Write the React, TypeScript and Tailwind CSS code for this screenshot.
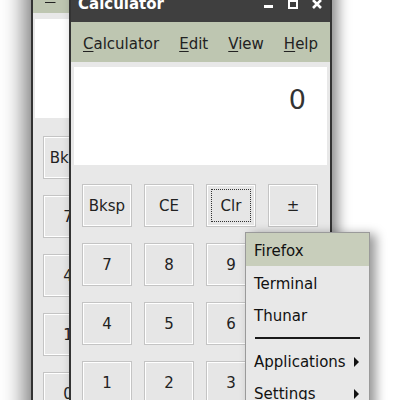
const font = { fontFamily: '"DejaVu Sans", Verdana, sans-serif' };

const keys = ['Bksp', 'CE', 'Clr', '±', '7', '8', '9', '÷', '4', '5', '6', '×', '1', '2', '3', '−', '0', '.', '=', '+'];

function Key({ label, focus }: { label: string; focus?: boolean }) {
  return (
    <div className="relative flex h-[43px] w-[50px] items-center justify-center border border-[#c4c4c4] bg-[#e6e6e6] pt-[2px] text-[15px] text-[#222] shadow-[inset_0_0_0_1px_#fff]">
      {label}
      {focus && <span className="absolute inset-[4px] border border-dotted border-[#333]" />}
    </div>
  );
}

function MenuBar() {
  const items = ['Calculator', 'Edit', 'View', 'Help'];
  return (
    <div className="flex h-[40px] items-center gap-[20px] bg-[#bec6b1] pl-[12px] pt-[4px] text-[15px] text-[#222]">
      {items.map(m => (
        <span key={m}>
          <span className="underline underline-offset-[2px]">{m[0]}</span>
          {m.slice(1)}
        </span>
      ))}
    </div>
  );
}

function Pad({ gap, labels }: { gap: number; labels?: boolean }) {
  return (
    <div className="grid grid-cols-[50px_50px_50px_50px] gap-x-[12px] gap-y-[16px] pl-[8px]" style={{ marginTop: gap }}>
      {keys.map(k => (
        <Key key={k} label={k} focus={labels && k === 'Clr'} />
      ))}
    </div>
  );
}

function TitleButtons() {
  return (
    <div className="flex items-end gap-[14px] pb-[13px]">
      <svg width="10" height="10" viewBox="0 0 10 10">
        <rect x="0" y="6" width="9" height="3" fill="#fff" />
      </svg>
      <svg width="10" height="10" viewBox="0 0 10 10">
        <rect x="1" y="1" width="8" height="8" fill="none" stroke="#fff" strokeWidth="2" />
        <rect x="0" y="0" width="10" height="3" fill="#fff" />
      </svg>
      <svg width="10" height="10" viewBox="0 0 10 10">
        <path d="M1 1 L9 9 M9 1 L1 9" stroke="#fff" strokeWidth="2.6" />
      </svg>
    </div>
  );
}

function MenuItem({ label, arrow }: { label: string; arrow?: boolean }) {
  return (
    <div className="flex h-[32px] items-center justify-between pl-[8px] pr-[10px] pt-[4px] text-[15px] text-[#111]">
      <span>{label}</span>
      {arrow && (
        <svg width="5" height="10" viewBox="0 0 5 10">
          <path d="M0 0 L5 5 L0 10 Z" fill="#111" />
        </svg>
      )}
    </div>
  );
}

export default function App() {
  return (
    <div className="relative h-[400px] w-[400px] overflow-hidden bg-white" style={font}>
      <div className="absolute left-[31px] top-[-27px] h-[460px] w-[264px] border-x-2 border-[#333] bg-[#e8e8e8] shadow-[-6px_0_22px_rgba(0,0,0,0.55)]">
        <MenuBar />
        <div className="flex flex-col px-[2px] pt-[6px]">
          <div className="h-[99px] bg-white" />
          <Pad gap={18} />
        </div>
      </div>

      <div className="absolute left-[69px] top-[-18px] h-[460px] w-[263px] border-x-2 border-[#333] bg-[#e8e8e8] shadow-[6px_2px_12px_rgba(0,0,0,0.45)]">
        <div className="flex h-[40px] items-start justify-between bg-[#3f3f3f] pl-[7px] pr-[8px]">
          <span className="pt-[13px] text-[15px] font-bold leading-[18px] text-white">Calculator</span>
          <div className="flex h-full items-end">
            <TitleButtons />
          </div>
        </div>
        <MenuBar />
        <div className="flex flex-col px-[3px] pt-[5px]">
          <div className="flex h-[98px] justify-end bg-white pr-[21px] pt-[17px] text-[27px] leading-[32px] text-[#333]">0</div>
          <Pad gap={19} labels />
        </div>
      </div>

      <div className="absolute left-[245px] top-[232px] w-[125px] border border-[#9a9a9a] bg-[#e8e8e8] shadow-[6px_2px_10px_rgba(0,0,0,0.4)]">
        <div className="flex h-[33px] items-center bg-[#c8cebb] pl-[8px] pt-[3px] text-[15px] text-[#111]">Firefox</div>
        <MenuItem label="Terminal" />
        <MenuItem label="Thunar" />
        <div className="flex h-[14px] items-center px-[9px] pt-[1px]">
          <div className="h-[2px] w-full bg-[#1a1a1a]" />
        </div>
        <MenuItem label="Applications" arrow />
        <MenuItem label="Settings" arrow />
        <MenuItem label="Log Out" />
      </div>
    </div>
  );
}
